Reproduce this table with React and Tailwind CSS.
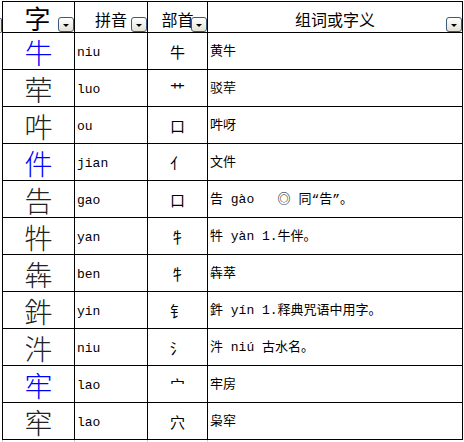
import React from "react";

const rows = [
  { ch: "牛", blue: true, py: "niu", rad: "牛", def: "黄牛" },
  { ch: "荦", py: "luo", rad: "艹", def: "驳荦" },
  { ch: "吽", py: "ou", rad: "口", def: "吽呀" },
  { ch: "件", blue: true, py: "jian", rad: "亻", def: "文件" },
  { ch: "告", py: "gao", rad: "口", def: "告 gào   ◎ 同“告”。" },
  { ch: "牪", py: "yan", rad: "牜", def: "牪 yàn 1.牛伴。" },
  { ch: "犇", py: "ben", rad: "牜", def: "犇萃" },
  { ch: "鈝", py: "yin", rad: "钅", def: "鈝 yín 1.释典咒语中用字。" },
  { ch: "汼", py: "niu", rad: "氵", def: "汼 niú 古水名。" },
  { ch: "牢", blue: true, py: "lao", rad: "宀", def: "牢房" },
  { ch: "窂", py: "lao", rad: "穴", def: "枭窂" },
];

const cjk = "font-['Noto_Sans_CJK_SC',sans-serif]";
const mono = "font-['Liberation_Mono','Noto_Sans_CJK_SC',monospace]";

function FilterButton() {
  return (
    <div className="absolute right-0 bottom-0 w-[16px] h-[15px] rounded-[3px] border border-[#3d5a78] bg-gradient-to-b from-white to-[#e4e1d6] flex items-center justify-center">
      <div className="mt-[2px] w-0 h-0 border-l-[3px] border-r-[3px] border-t-[3px] border-l-transparent border-r-transparent border-t-black" />
    </div>
  );
}

function HeadCell({ children, big }) {
  return (
    <div className="relative h-[31px] border-r border-b border-black flex items-center justify-center">
      {big ? (
        <span className={`${cjk} text-[26px] leading-[26px] mt-[2px] pr-[2px] text-black`}>{children}</span>
      ) : (
        <span className={`${cjk} text-[16px] leading-[16px] mt-[3px] text-black`}>{children}</span>
      )}
      <FilterButton />
    </div>
  );
}

export default function App() {
  return (
    <div className="relative w-[464px] h-[442px] bg-white overflow-hidden pl-[2px] pt-[1px]">
      <div className="absolute left-0 top-[18px] w-[2px] h-[15px] rounded-r-[2px] border-r border-y border-[#3d5a78] bg-[#eeece4]" />
      <div className="grid grid-cols-[72px_73px_60px_255px] border-l border-t border-black w-[461px]">
        <HeadCell big>字</HeadCell>
        <HeadCell>拼音</HeadCell>
        <HeadCell>部首</HeadCell>
        <HeadCell>组词或字义</HeadCell>
        {rows.map((r, i) => (
          <React.Fragment key={i}>
            <div className="h-[37px] border-r border-b border-black flex items-center justify-center">
              <span
                className={`${cjk} font-light text-[28px] leading-[28px] mt-[1px] ${
                  r.blue ? "text-[#0000ff]" : "text-[#222222]"
                }`}
              >
                {r.ch}
              </span>
            </div>
            <div className="h-[37px] border-r border-b border-black flex items-center pl-[2px] pt-[3px]">
              <span className={`${mono} text-[13px] text-black`}>{r.py}</span>
            </div>
            <div className="h-[37px] border-r border-b border-black flex items-center justify-center pt-[2px]">
              <span className={`${cjk} text-[15px] text-black`}>{r.rad}</span>
            </div>
            <div className="h-[37px] border-r border-b border-black flex items-center pl-[2px] pt-[2px]">
              <span className={`${mono} text-[13px] text-black whitespace-pre`}>{r.def}</span>
            </div>
          </React.Fragment>
        ))}
      </div>
      <div className="grid grid-cols-[72px_73px_60px_255px] w-[461px] h-[3px] border-l border-[#d0d0d0]">
        <div className="border-r border-[#d0d0d0]" />
        <div className="border-r border-[#d0d0d0]" />
        <div className="border-r border-[#d0d0d0]" />
        <div />
      </div>
    </div>
  );
}
